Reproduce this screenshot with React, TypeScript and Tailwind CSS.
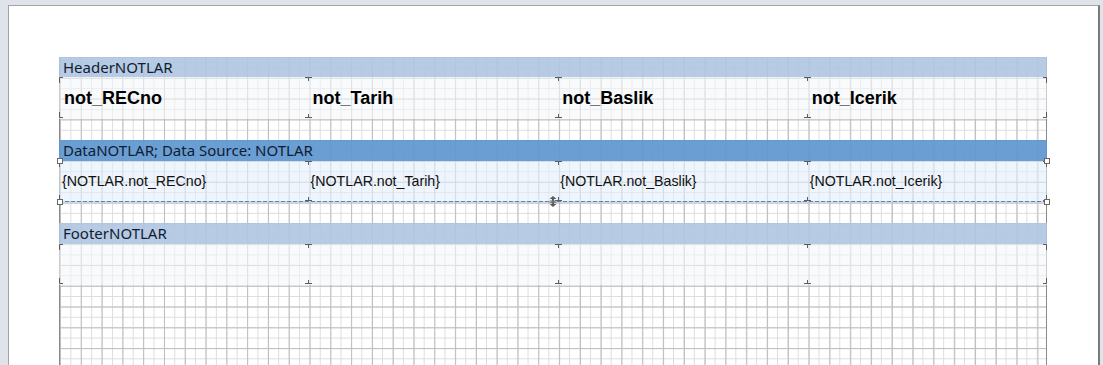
import React from "react";

const COLS = ["left-[249.6px]", "left-[499.2px]", "left-[748.8px]"];

function TopTick({ pos }: { pos: string }) {
  return (
    <svg className={`absolute top-0 ${pos} -ml-[3.5px]`} width="7" height="4" viewBox="0 0 7 4">
      <path d="M0 0.5H7M3.5 0V4" stroke="#5c5c5c" strokeWidth="1" fill="none" />
    </svg>
  );
}

function BottomTick({ pos }: { pos: string }) {
  return (
    <svg className={`absolute bottom-[1px] ${pos} -ml-[3.5px]`} width="7" height="4" viewBox="0 0 7 4">
      <path d="M0 3.5H7M3.5 0V4" stroke="#5c5c5c" strokeWidth="1" fill="none" />
    </svg>
  );
}

function Marks() {
  return (
    <>
      {COLS.map((c) => (
        <TopTick key={"t" + c} pos={c} />
      ))}
      {COLS.map((c) => (
        <BottomTick key={"b" + c} pos={c} />
      ))}
      <svg className="absolute top-0 left-0" width="4" height="6" viewBox="0 0 4 6">
        <path d="M0.5 6V0.5H4" stroke="#5c5c5c" fill="none" />
      </svg>
      <svg className="absolute top-0 right-0" width="4" height="6" viewBox="0 0 4 6">
        <path d="M0 0.5H3.5V6" stroke="#5c5c5c" fill="none" />
      </svg>
      <svg className="absolute bottom-[1px] left-0" width="4" height="6" viewBox="0 0 4 6">
        <path d="M0.5 0V5.5H4" stroke="#5c5c5c" fill="none" />
      </svg>
      <svg className="absolute bottom-[1px] right-0" width="4" height="6" viewBox="0 0 4 6">
        <path d="M0 5.5H3.5V0" stroke="#5c5c5c" fill="none" />
      </svg>
    </>
  );
}

function BandTitle({ children, dark }: { children: React.ReactNode; dark?: boolean }) {
  return (
    <div
      className={`-mx-px h-[20.8px] shrink-0 pl-[4px] font-['Noto_Sans',sans-serif] text-[15px] leading-[20.8px] text-[#0f1d33] ${
        dark ? "bg-[#6097d0]/[0.93]" : "bg-[#b0c5e1]/[0.9]"
      }`}
    >
      {children}
    </div>
  );
}

const Gap = () => <div className="h-[20.8px] shrink-0" />;

const colGrid = "grid grid-cols-[249.6px_249.6px_249.6px_1fr] items-center h-full";

export default function App() {
  return (
    <div className="h-[365px] w-[1103px] overflow-hidden bg-[#dfe3ea] pl-[8px] pt-[5px]">
      <div className="h-[420px] w-[1092px] border-l border-t border-r-2 border-l-[#a3a3a3] border-t-[#a3a3a3] border-r-[#7a7a7a] bg-white pl-[50px] pt-[50.6px]">
        <div className="flex h-[340px] w-[988px] flex-col border-x border-[#8a8a8a] bg-white [background-image:linear-gradient(to_right,#bdbdbd_1px,transparent_1px),linear-gradient(to_bottom,#bdbdbd_1px,transparent_1px),linear-gradient(to_right,#dcdcdc_1px,transparent_1px),linear-gradient(to_bottom,#dcdcdc_1px,transparent_1px)] [background-size:20.8px_20.8px,20.8px_20.8px,10.4px_10.4px,10.4px_10.4px]">
          <BandTitle>HeaderNOTLAR</BandTitle>
          <div className="relative -mx-px h-[41.6px] shrink-0 bg-[#f3f6fa]/[0.6]">
            <div className={`${colGrid} font-['Liberation_Sans',Arial,sans-serif] text-[18px] font-bold text-black`}>
              <div className="pl-[5px]">not_RECno</div>
              <div className="pl-[4px]">not_Tarih</div>
              <div className="pl-[4px]">not_Baslik</div>
              <div className="pl-[4px]">not_Icerik</div>
            </div>
            <Marks />
          </div>
          <Gap />
          <BandTitle dark>DataNOTLAR; Data Source: NOTLAR</BandTitle>
          <div className="relative -mx-px h-[41.6px] shrink-0 bg-[#e3eefa]/[0.6]">
            <div className={`${colGrid} font-['Liberation_Sans',Arial,sans-serif] text-[14.2px] text-[#111]`}>
              <div className="pl-[3px]">{"{NOTLAR.not_RECno}"}</div>
              <div className="pl-[2px]">{"{NOTLAR.not_Tarih}"}</div>
              <div className="pl-[2px]">{"{NOTLAR.not_Baslik}"}</div>
              <div className="pl-[2px]">{"{NOTLAR.not_Icerik}"}</div>
            </div>
            <Marks />
            <div className="absolute bottom-0 left-0 right-0 h-px [background-image:repeating-linear-gradient(to_right,#4f86c9_0px,#4f86c9_4px,#c7d9ef_4px,#c7d9ef_6px)]" />
            <div className="absolute left-[-2px] top-[-3px] h-[6px] w-[6px] border border-[#666] bg-white" />
            <div className="absolute right-[-3px] top-[-3px] h-[6px] w-[6px] border border-[#666] bg-white" />
            <div className="absolute bottom-[-3px] left-[-2px] h-[6px] w-[6px] border border-[#666] bg-white" />
            <div className="absolute bottom-[-3px] right-[-3px] h-[6px] w-[6px] border border-[#666] bg-white" />
            <svg className="absolute bottom-[-5px] left-1/2 -ml-[4px]" width="8" height="11" viewBox="0 0 8 11">
              <path d="M4 0L7.5 3H0.5Z" fill="#5a5a5a" />
              <rect x="3" y="3" width="2" height="5" fill="#5a5a5a" />
              <rect x="0.5" y="4.5" width="7" height="0.9" fill="#7a7a7a" />
              <rect x="0.5" y="6" width="7" height="0.9" fill="#7a7a7a" />
              <path d="M4 11L7.5 8H0.5Z" fill="#5a5a5a" />
            </svg>
          </div>
          <Gap />
          <BandTitle>FooterNOTLAR</BandTitle>
          <div className="relative -mx-px h-[41.6px] shrink-0 bg-[#f3f6fa]/[0.6]">
            <Marks />
          </div>
          <div className="flex-1" />
        </div>
      </div>
    </div>
  );
}
